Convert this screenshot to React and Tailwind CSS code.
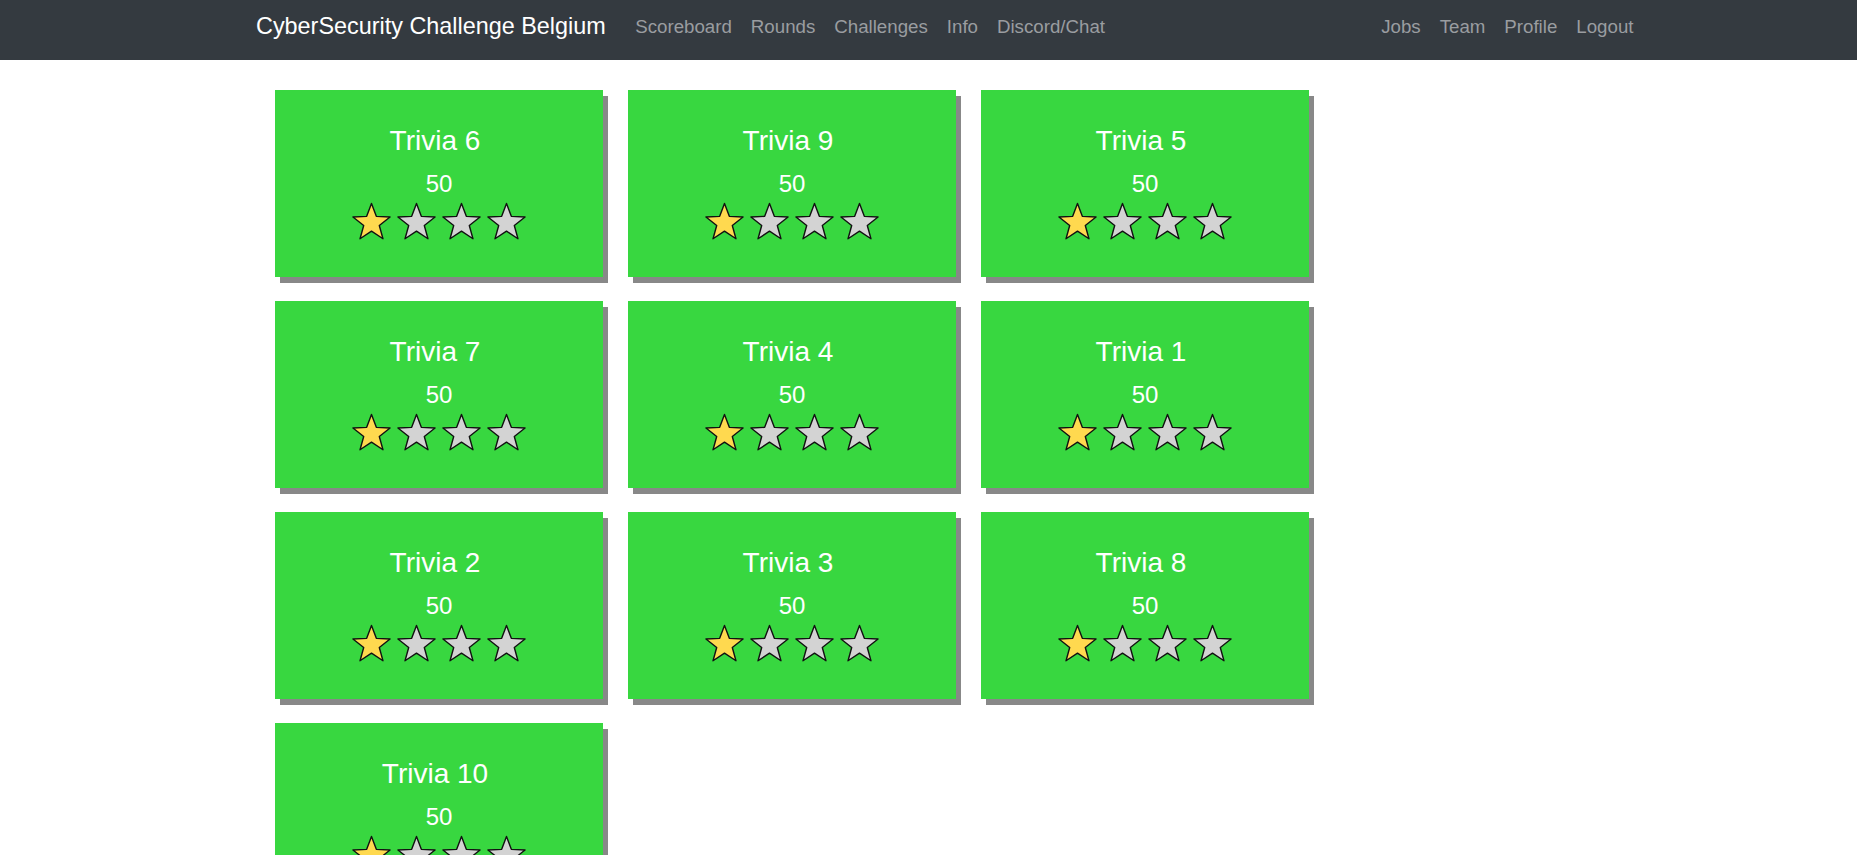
import React from 'react';

const challenges = [
    'Trivia 6', 'Trivia 9', 'Trivia 5',
    'Trivia 7', 'Trivia 4', 'Trivia 1',
    'Trivia 2', 'Trivia 3', 'Trivia 8',
    'Trivia 10',
];

const leftLinks = ['Scoreboard', 'Rounds', 'Challenges', 'Info', 'Discord/Chat'];
const rightLinks = ['Jobs', 'Team', 'Profile', 'Logout'];

// five-pointed star points around (cx, cy)
function starPoints(cx, cy, outer, inner) {
    const pts = [];
    for (let i = 0; i < 10; i++) {
        const r = i % 2 === 0 ? outer : inner;
        const a = (-90 + i * 36) * Math.PI / 180;
        pts.push(`${(cx + r * Math.cos(a)).toFixed(2)},${(cy + r * Math.sin(a)).toFixed(2)}`);
    }
    return pts.join(' ');
}

const STAR = starPoints(22.5, 21, 19.5, 8.2);

function Star({ filled }) {
    return (
        <svg width="45" height="38" viewBox="0 0 45 38" className="block">
            <polygon
                points={STAR}
                fill={filled ? '#ffd94f' : '#d3d3d3'}
                stroke="#111"
                strokeWidth="1.4"
                strokeLinejoin="round"
            />
        </svg>
    );
}

function ChallengeCard({ name }) {
    return (
        <div className="w-[328px] h-[187px] bg-[#38d740] shadow-[5px_6px_0_#888888] flex flex-col items-center pt-[35px] text-white">
            <div className="text-[28px] leading-[32px] pr-[8px]">{name}</div>
            <div className="text-[24px] leading-[28px] mt-[13px]">50</div>
            <div className="flex mt-[4px]">
                <Star filled />
                <Star />
                <Star />
                <Star />
            </div>
        </div>
    );
}

export default function App() {
    return (
        <div className="min-h-screen bg-white font-['Liberation_Sans',Arial,sans-serif]">
            {/* Navbar */}
            <nav className="h-[60px] bg-[#343a40]">
                <div className="ml-[256px] w-[1387px] flex justify-between items-start">
                    <div className="flex items-start">
                        <a className="text-white text-[23.4px] leading-[30px] mt-[11px] mr-[20px]">CyberSecurity Challenge Belgium</a>
                        <ul className="flex mt-[15px]">
                            {leftLinks.map((l) => (
                                <li key={l} className="px-[9.5px] text-[18.7px] leading-[24px] text-[#9a9da0]">{l}</li>
                            ))}
                        </ul>
                    </div>
                    <ul className="flex mt-[15px]">
                        {rightLinks.map((l) => (
                            <li key={l} className="px-[9.5px] text-[18.7px] leading-[24px] text-[#9a9da0]">{l}</li>
                        ))}
                    </ul>
                </div>
            </nav>

            {/* Challenges */}
            <div className="ml-[275px] mt-[30px] grid grid-cols-[repeat(3,328px)] gap-x-[25px] gap-y-[24px]">
                {challenges.map((c) => (
                    <ChallengeCard key={c} name={c} />
                ))}
            </div>
        </div>
    );
}
